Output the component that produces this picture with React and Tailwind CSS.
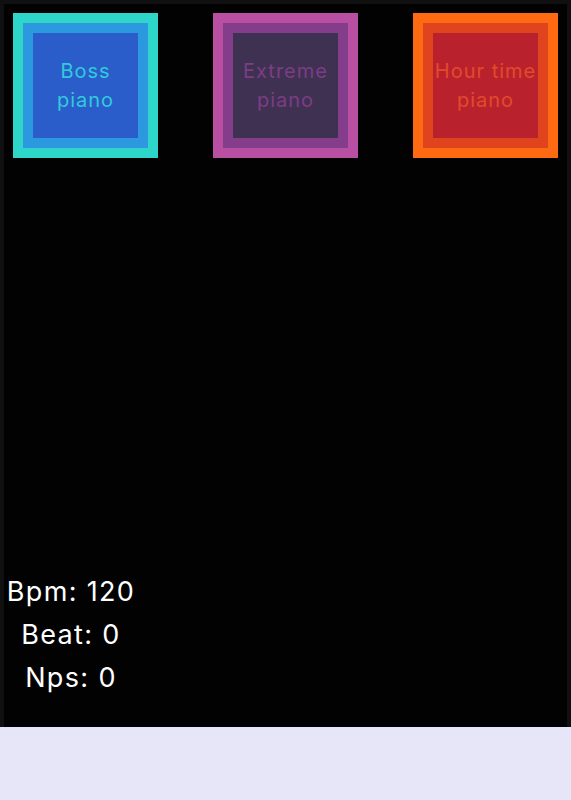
import React from "react";

const pianos = [
  {
    name: ["Boss", "piano"],
    outer: "bg-[#2ed6c9]",
    middle: "bg-[#2b98e0]",
    inner: "bg-[#2a5dc9]",
    text: "text-[#2fcbdc]",
  },
  {
    name: ["Extreme", "piano"],
    outer: "bg-[#b94fa2]",
    middle: "bg-[#833d8b]",
    inner: "bg-[#3f3152]",
    text: "text-[#7c3d84]",
  },
  {
    name: ["Hour time", "piano"],
    outer: "bg-[#fd6a11]",
    middle: "bg-[#e0441f]",
    inner: "bg-[#b9222d]",
    text: "text-[#e14a2b]",
  },
];

function PianoCard({ piano }) {
  return (
    <button className={`w-[145px] h-[145px] p-[10px] ${piano.outer}`}>
      <div className={`w-full h-full p-[10px] ${piano.middle}`}>
        <div
          className={`w-full h-full flex flex-col items-center justify-center text-[20px] leading-[29px] tracking-[0.05em] whitespace-nowrap ${piano.inner} ${piano.text}`}
        >
          <span>{piano.name[0]}</span>
          <span>{piano.name[1]}</span>
        </div>
      </div>
    </button>
  );
}

export default function App() {
  return (
    <div
      className="min-h-[800px] bg-[#e6e6f8]"
      style={{ fontFamily: "Inter, 'Open Sans', sans-serif" }}
    >
      <div className="h-[727px] bg-[#030203] border-t-4 border-x-4 border-[#101010] flex flex-col">
        <div className="flex justify-between px-[9px] pt-[9px]">
          {pianos.map((p) => (
            <PianoCard key={p.name[0]} piano={p} />
          ))}
        </div>
        <div className="mt-auto mb-[28px] w-[134px] flex flex-col items-center text-white text-[27px] leading-[43px] tracking-[0.05em]">
          <span>Bpm: 120</span>
          <span>Beat: 0</span>
          <span>Nps: 0</span>
        </div>
      </div>
    </div>
  );
}
